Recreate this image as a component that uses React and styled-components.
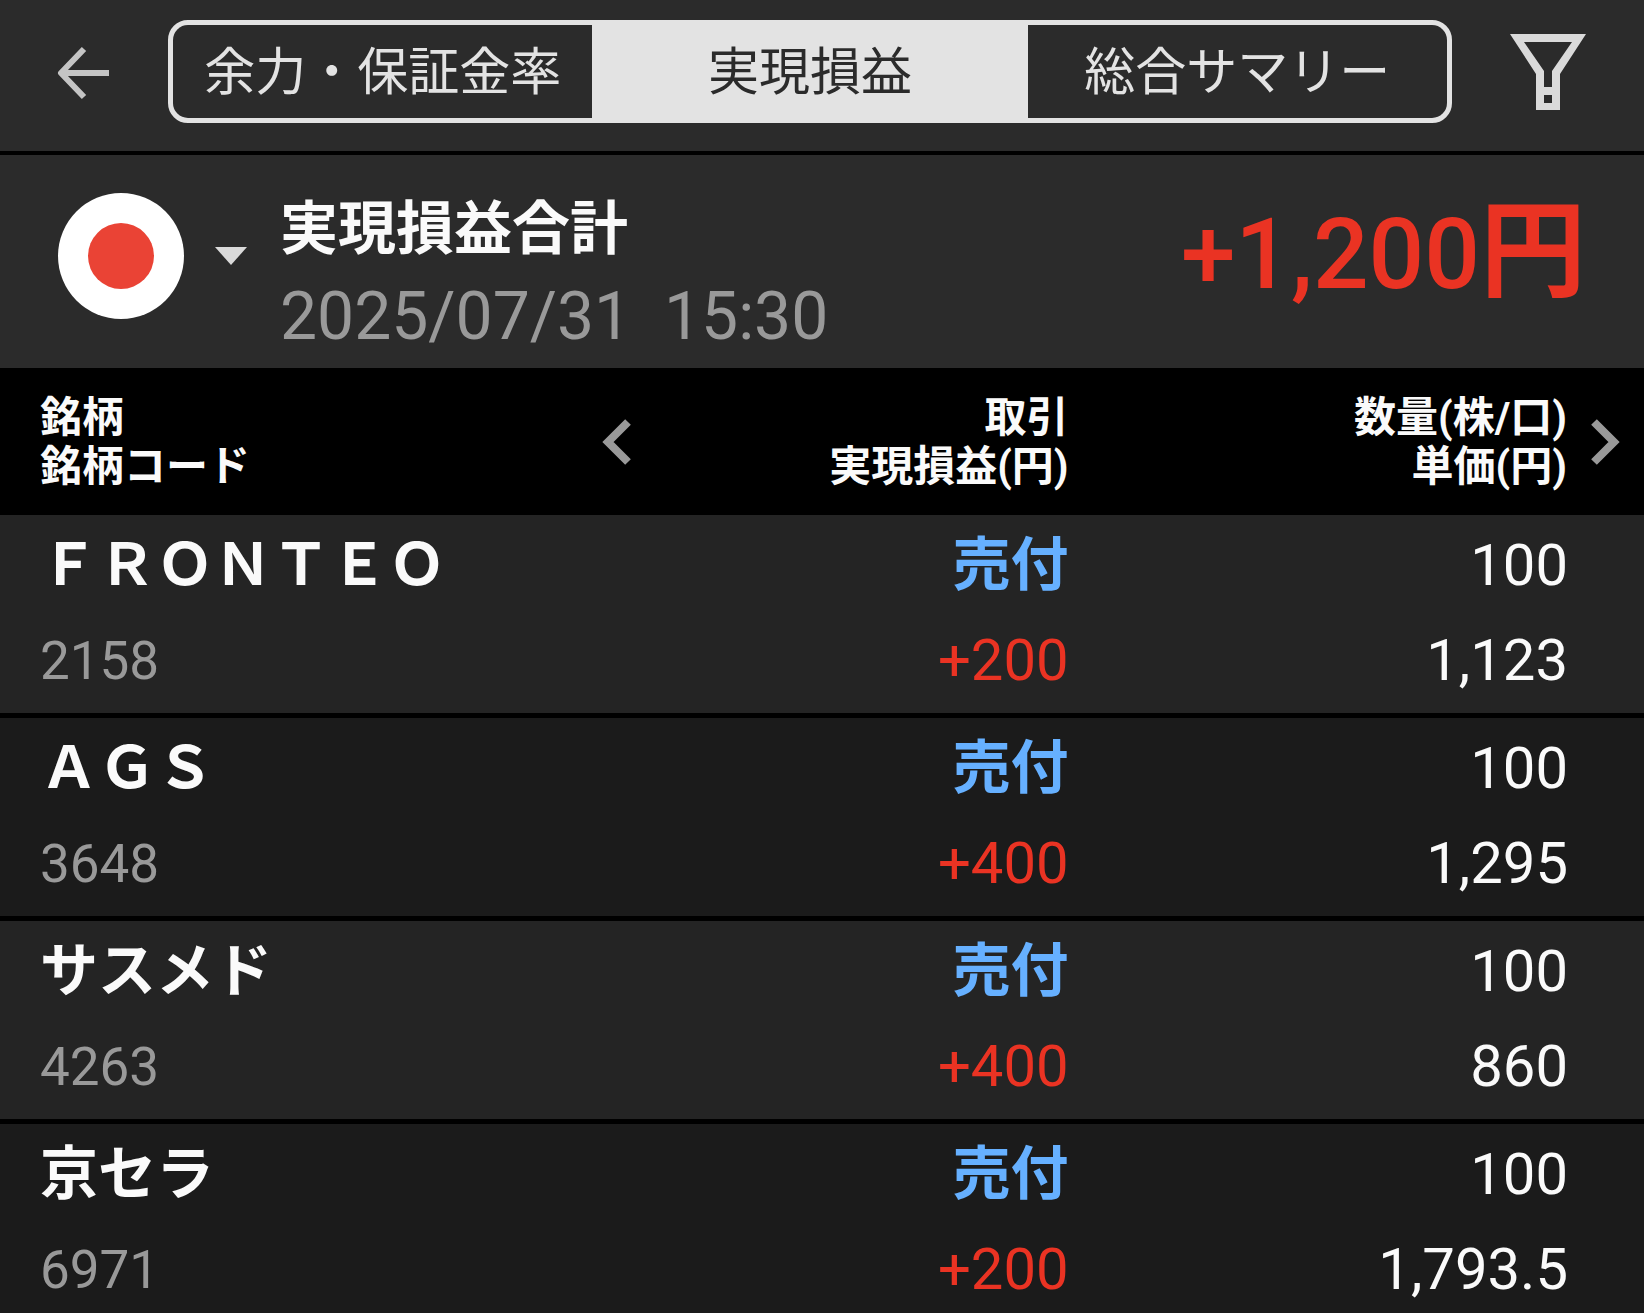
import React, { useState } from "react";
import styled, { createGlobalStyle } from "styled-components";

const GlobalStyle = createGlobalStyle`
  * {
    box-sizing: border-box;
  }

  body {
    margin: 0;
    background-color: #1b1b1b;
    color: #fafafa;
    font-family: Roboto, "Noto Sans CJK JP", sans-serif;
    font-kerning: none;
  }

  button {
    padding: 0;
    border: none;
    background: none;
    color: inherit;
    font: inherit;
    cursor: pointer;
  }

  svg {
    display: block;
  }
`;

const Screen = styled.main`
  display: flex;
  flex-direction: column;
  height: 100vh;
  overflow: hidden;
`;

const Header = styled.header`
  display: flex;
  align-items: center;
  gap: 58px;
  padding: 20px 58px 28px 56px;
  background-color: #2b2b2b;
  border-bottom: 4px solid #000;
`;

const IconButton = styled.button`
  display: flex;
  color: #c4c4c4;
`;

const Tabs = styled.nav`
  flex: 1;
  display: grid;
  grid-template-columns: repeat(3, 1fr);
  gap: 8px;
  height: 103px;
  overflow: hidden;
  border: 5px solid #e3e3e3;
  border-radius: 20px;
  background-color: #e3e3e3;
`;

const Tab = styled.button`
  padding-top: 2px;
  background-color: ${(props) => (props.$active ? "#e3e3e3" : "#2b2b2b")};
  color: ${(props) => (props.$active ? "#2b2b2b" : "#e3e3e3")};
  font-size: 51px;
  line-height: 91px;
  white-space: nowrap;
`;

const Summary = styled.section`
  display: flex;
  align-items: center;
  padding: 0 58px;
  background-color: #2b2b2b;
`;

const CountryButton = styled.button`
  display: flex;
  align-items: center;
  gap: 31px;
  margin: 0 33px 12px 0;
`;

const Flag = styled.span`
  display: grid;
  place-items: center;
  width: 126px;
  height: 126px;
  border-radius: 50%;
  background-color: #fff;

  &::after {
    content: "";
    width: 66px;
    height: 66px;
    border-radius: 50%;
    background-color: #ea4335;
  }
`;

const SummaryText = styled.div`
  flex: 1;
  padding: 36px 0 12px;
`;

const Title = styled.h1`
  margin: 0 0 10px;
  font-size: 58px;
  line-height: 76px;
  font-weight: 700;
`;

const DateTime = styled.time`
  display: block;
  color: #999;
  font-size: 66px;
  line-height: 79px;
  white-space: pre;
`;

const Amount = styled.div`
  margin-bottom: 16px;
  color: #ea3323;
  font-size: 98px;
  line-height: 120px;
  font-weight: 500;
`;

const Yen = styled.span`
  font-size: 106px;
  font-weight: 700;
`;

const List = styled.div`
  flex: 1;
  min-height: 0;
  overflow-y: auto;
  scrollbar-width: none;
`;

const Table = styled.table`
  width: 100%;
  table-layout: fixed;
  border-spacing: 0;
`;

const HeadCell = styled.th`
  width: ${(props) => props.$width};
  padding: ${(props) => props.$padding};
  background-color: #000;
  font-size: 42px;
  line-height: 49px;
  font-weight: 700;
  text-align: ${(props) => props.$align || "right"};
`;

const HeadInner = styled.div`
  display: flex;
  align-items: center;
  justify-content: ${(props) => props.$justify};
  gap: 24px;
`;

const PageButton = styled.button`
  color: #999;
`;

const Row = styled.tr`
  background-color: #242424;

  &:nth-child(even) {
    background-color: #1b1b1b;
  }
`;

const Cell = styled.td`
  padding: ${(props) => props.$padding};
  border-bottom: 5px solid #000;
  font-size: 58px;
  line-height: 95px;
  text-align: ${(props) => props.$align || "right"};
`;

const Line = styled.div`
  height: 95px;
  white-space: nowrap;
`;

const Name = styled(Line)`
  font-weight: 700;
`;

const Code = styled(Line)`
  color: #999;
  font-size: 53px;
  line-height: 97px;
`;

const Side = styled(Line)`
  color: #66b0ff;
  font-weight: 700;
`;

const Profit = styled(Line)`
  color: #ea3323;
`;

const tabs = ["余力・保証金率", "実現損益", "総合サマリー"];

// Latin names are listed in full-width letters
const trades = [
  { name: "\uFF26\uFF32\uFF2F\uFF2E\uFF34\uFF25\uFF2F", code: "2158", side: "売付", profit: "+200", qty: "100", price: "1,123" },
  { name: "\uFF21\uFF27\uFF33", code: "3648", side: "売付", profit: "+400", qty: "100", price: "1,295" },
  { name: "サスメド", code: "4263", side: "売付", profit: "+400", qty: "100", price: "860" },
  { name: "京セラ", code: "6971", side: "売付", profit: "+200", qty: "100", price: "1,793.5" },
];

const BackIcon = () => (
  <svg width="54" height="56" viewBox="0 0 54 56" fill="none" stroke="currentColor" strokeWidth="6">
    <path d="M53 29H6M28 5L5 29l23 24" strokeLinejoin="round" />
  </svg>
);

const FilterIcon = () => (
  <svg width="76" height="76" viewBox="0 0 76 76" fill="#dadada" fillRule="evenodd">
    <path d="M0 0H76L50 40V76H26V40ZM14 8L34 37V53H42V37L62 8ZM34 61V69H42V61Z" />
  </svg>
);

const Chevron = ({ right }) => (
  <svg width="29" height="46" viewBox="0 0 29 46" fill="none" stroke="currentColor" strokeWidth="8">
    <path d={right ? "M3 3l20 20L3 43" : "M26 3L6 23l20 20"} />
  </svg>
);

const App = () => {
  const [active, setActive] = useState(1);

  return (
    <Screen>
      <GlobalStyle />
      <Header>
        <IconButton aria-label="戻る">
          <BackIcon />
        </IconButton>
        <Tabs>
          {tabs.map((tab, i) => (
            <Tab key={tab} $active={i === active} onClick={() => setActive(i)}>
              {tab}
            </Tab>
          ))}
        </Tabs>
        <IconButton aria-label="絞り込み">
          <FilterIcon />
        </IconButton>
      </Header>

      <Summary>
        <CountryButton aria-label="日本">
          <Flag />
          <svg width="32" height="18" viewBox="0 0 32 18" fill="#dadada">
            <path d="M0 0H32L16 18Z" />
          </svg>
        </CountryButton>
        <SummaryText>
          <Title>実現損益合計</Title>
          <DateTime dateTime="2025-07-31T15:30">2025/07/31  15:30</DateTime>
        </SummaryText>
        <Amount>
          +1,200<Yen>円</Yen>
        </Amount>
      </Summary>

      <List>
        <Table>
          <thead>
            <tr>
              <HeadCell $width="36%" $padding="25px 0 24px 40px" $align="left">
                銘柄
                <br />
                銘柄コード
              </HeadCell>
              <HeadCell $width="29%" $padding="25px 0 24px 10px">
                <HeadInner $justify="space-between">
                  <PageButton aria-label="前の列">
                    <Chevron />
                  </PageButton>
                  <div>
                    取引
                    <br />
                    実現損益(円)
                  </div>
                </HeadInner>
              </HeadCell>
              <HeadCell $padding="25px 24px 24px 0">
                <HeadInner $justify="flex-end">
                  <div>
                    数量(株/口)
                    <br />
                    単価(円)
                  </div>
                  <PageButton aria-label="次の列">
                    <Chevron right />
                  </PageButton>
                </HeadInner>
              </HeadCell>
            </tr>
          </thead>
          <tbody>
            {trades.map((trade) => (
              <Row key={trade.code}>
                <Cell $padding="3px 0 5px 40px" $align="left">
                  <Name>{trade.name}</Name>
                  <Code>{trade.code}</Code>
                </Cell>
                <Cell $padding="3px 0 5px">
                  <Side>{trade.side}</Side>
                  <Profit>{trade.profit}</Profit>
                </Cell>
                <Cell $padding="3px 76px 5px 0">
                  <Line>{trade.qty}</Line>
                  <Line>{trade.price}</Line>
                </Cell>
              </Row>
            ))}
          </tbody>
        </Table>
      </List>
    </Screen>
  );
};

export default App;
